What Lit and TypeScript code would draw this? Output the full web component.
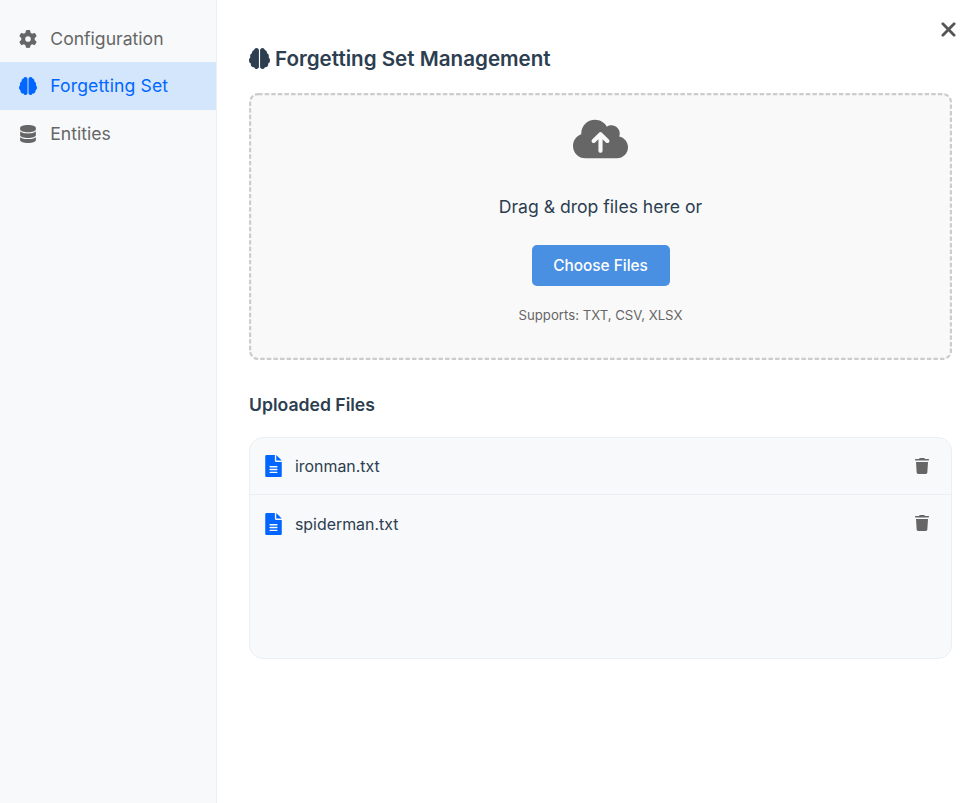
import { LitElement, html, css, svg } from "lit";
import { customElement, property, state } from "lit/decorators.js";
import { classMap } from "lit/directives/class-map.js";

const ICONS: Record<string, { box: string; d: string }> = {
  gear: {
    box: "0 0 512 512",
    d: "M495.9 166.6c3.2 8.7 .5 18.4-6.4 24.6l-43.3 39.4c1.1 8.3 1.7 16.8 1.7 25.4s-.6 17.1-1.7 25.4l43.3 39.4c6.9 6.2 9.6 15.9 6.4 24.6c-4.4 11.9-9.7 23.3-15.8 34.3l-4.7 8.1c-6.6 11-14 21.4-22.1 31.2c-5.9 7.2-15.7 9.6-24.5 6.8l-55.7-17.7c-13.4 10.3-28.2 18.9-44 25.4l-12.5 57.1c-2 9.1-9 16.3-18.2 17.8c-13.8 2.3-28 3.5-42.5 3.5s-28.7-1.2-42.5-3.5c-9.2-1.5-16.2-8.7-18.2-17.8l-12.5-57.1c-15.8-6.5-30.6-15.1-44-25.4L83.1 425.9c-8.8 2.8-18.6 .3-24.5-6.8c-8.1-9.8-15.5-20.2-22.1-31.2l-4.7-8.1c-6.1-11-11.4-22.4-15.8-34.3c-3.2-8.7-.5-18.4 6.4-24.6l43.3-39.4C64.6 273.1 64 264.6 64 256s.6-17.1 1.7-25.4L22.4 191.2c-6.9-6.2-9.6-15.9-6.4-24.6c4.4-11.9 9.7-23.3 15.8-34.3l4.7-8.1c6.6-11 14-21.4 22.1-31.2c5.9-7.2 15.7-9.6 24.5-6.8l55.7 17.7c13.4-10.3 28.2-18.9 44-25.4l12.5-57.1c2-9.1 9-16.3 18.2-17.8C227.3 1.2 241.5 0 256 0s28.7 1.2 42.5 3.5c9.2 1.5 16.2 8.7 18.2 17.8l12.5 57.1c15.8 6.5 30.6 15.1 44 25.4l55.7-17.7c8.8-2.8 18.6-.3 24.5 6.8c8.1 9.8 15.5 20.2 22.1 31.2l4.7 8.1c6.1 11 11.4 22.4 15.8 34.3zM256 336a80 80 0 1 0 0-160 80 80 0 1 0 0 160z",
  },
  brain: {
    box: "0 0 512 512",
    d: "M184 0c30.9 0 58 25.1 58 56V456c0 30.9-27.1 56-58 56c-28.9 0-50.7-17.9-59.7-43.1c-5.2 1.4-8.7 1.1-14.3 1.1c-35.3 0-66-30.7-66-66c0-9.4-.7-16.6 1.6-23.2C18.4 367.4 0 338.2 0 304c0-31.9 12.7-57.5 33.8-76.3C28.1 216.8 28 205 28 192c0-30.7 17.6-54.3 43.4-66.6C70.8 121.9 74 116 74 110c0-29.9 22.6-55.1 50.3-64.1C133.3 19.9 155.1 0 184 0zM328 0c28.9 0 50.6 19.9 59.7 45.9c27.8 9 50.3 34.1 50.3 64.1c0 6 3.2 11.9 2.6 15.4c25.8 12.3 43.4 35.9 43.4 66.6c0 13-.1 24.8-5.8 35.7C499.3 246.5 512 272.1 512 304c0 34.2-18.4 63.4-45.6 76.8c2.3 6.6 1.6 13.8 1.6 23.2c0 35.3-30.7 66-66 66c-5.6 0-9.1 .3-14.3-1.1c-9 25.2-30.8 43.1-59.7 43.1c-30.9 0-58-25.1-58-56V56c0-30.9 27.1-56 58-56z",
  },
  database: {
    box: "0 0 448 512",
    d: "M448 80v48c0 44.2-100.3 80-224 80S0 172.2 0 128V80C0 35.8 100.3 0 224 0S448 35.8 448 80zM393.2 214.7c20.8-7.4 39.9-16.9 54.8-28.6V288c0 44.2-100.3 80-224 80S0 332.2 0 288V186.1c14.9 11.8 34 21.2 54.8 28.6C99.7 230.7 159.5 240 224 240s124.3-9.3 169.2-25.3zM0 346.1c14.9 11.8 34 21.2 54.8 28.6C99.7 390.7 159.5 400 224 400s124.3-9.3 169.2-25.3c20.8-7.4 39.9-16.9 54.8-28.6V432c0 44.2-100.3 80-224 80S0 476.2 0 432V346.1z",
  },
  cloud: {
    box: "0 0 640 512",
    d: "M144 480C64.5 480 0 415.5 0 336c0-62.8 40.2-116.2 96.2-135.9c-.1-2.7-.2-5.4-.2-8.1c0-88.4 71.6-160 160-160c59.3 0 111 32.2 138.7 80.2C409.9 102 428.3 96 448 96c53 0 96 43 96 96c0 12.2-2.3 23.8-6.4 34.6C596 238.4 640 290.1 640 352c0 70.7-57.3 128-128 128H144zm79-217c-9.4 9.4-9.4 24.6 0 33.9s24.6 9.4 33.9 0l39-39V392c0 13.3 10.7 24 24 24s24-10.7 24-24V257.9l39 39c9.4 9.4 24.6 9.4 33.9 0s9.4-24.6 0-33.9l-80-80c-9.4-9.4-24.6-9.4-33.9 0l-80 80z",
  },
  file: {
    box: "0 0 384 512",
    d: "M224 136V0H32C14 0 0 14 0 32v448c0 18 14 32 32 32h320c18 0 32-14 32-32V160H248c-13.2 0-24-10.8-24-24zM384 128H256V0zM112 256H272c8.8 0 16 7.2 16 16s-7.2 16-16 16H112c-8.8 0-16-7.2-16-16s7.2-16 16-16zm0 66H272c8.8 0 16 7.2 16 16s-7.2 16-16 16H112c-8.8 0-16-7.2-16-16s7.2-16 16-16zm0 66H272c8.8 0 16 7.2 16 16s-7.2 16-16 16H112c-8.8 0-16-7.2-16-16s7.2-16 16-16z",
  },
  trash: {
    box: "0 0 448 512",
    d: "M135.2 17.7L124 32H16C7.2 32 0 39.2 0 48V64C0 72.8 7.2 80 16 80H432c8.8 0 16-7.2 16-16V48c0-8.8-7.2-16-16-16H324l-11.2-14.3C307.4 6.8 296.3 0 284.2 0H163.8c-12.1 0-23.2 6.8-28.6 17.7zM416 128H32L53.2 467c1.6 25.3 22.6 45 47.9 45H346.9c25.3 0 46.3-19.7 47.9-45L416 128z",
  },
  close: {
    box: "0 0 384 512",
    d: "M342.6 150.6c12.5-12.5 12.5-32.8 0-45.3s-32.8-12.5-45.3 0L192 210.7 86.6 105.4c-12.5-12.5-32.8-12.5-45.3 0s-12.5 32.8 0 45.3L146.7 256 41.4 361.4c-12.5 12.5-12.5 32.8 0 45.3s32.8 12.5 45.3 0L192 301.3 297.4 406.6c12.5 12.5 32.8 12.5 45.3 0s12.5-32.8 0-45.3L237.3 256 342.6 150.6z",
  },
};

@customElement("fs-icon")
class FsIcon extends LitElement {
  @property() name = "gear";
  static styles = css`
    :host { display: block; }
    .glyph { display: block; width: 100%; height: 100%; fill: currentColor; }
  `;
  render() {
    const icon = ICONS[this.name];
    return html`<svg class="glyph" viewBox=${icon.box} aria-hidden="true">${svg`<path d=${icon.d}></path>`}</svg>`;
  }
}

@customElement("app-root")
class AppRoot extends LitElement {
  @state() private active = "Forgetting Set";
  @state() private files = ["ironman.txt", "spiderman.txt"];
  private tabs = [
    { icon: "gear", label: "Configuration" },
    { icon: "brain", label: "Forgetting Set" },
    { icon: "database", label: "Entities" },
  ];

  static styles = css`
    * { box-sizing: border-box; }
    :host {
      display: flex;
      height: 100vh;
      overflow: hidden;
      position: relative;
      background: #fff;
      color: #2c3e50;
      font-family: Inter, "Liberation Sans", sans-serif;
    }
    button { font-family: inherit; border: 0; padding: 0; background: none; cursor: pointer; }
    .sidebar { width: 217px; flex: none; padding-top: 14.8px; background: #f8f9fb; border-right: 1px solid #eceff2; }
    .tab {
      display: flex; align-items: center; gap: 13.3px;
      width: 100%; height: 47.6px; padding: 0 19px;
      color: #666; font-size: 17.6px; line-height: 22px; text-align: left;
    }
    .tab.active { background: #d4e6fc; color: #0066ff; }
    .tab.active .tab-label { letter-spacing: 0.1px; }
    .tab-icon { width: 18px; height: 18px; }
    .main { flex: 1; min-width: 0; padding: 45px 23px 0 32px; display: flex; flex-direction: column; }
    .title { display: flex; align-items: center; gap: 5px; margin: 0; height: 27px; font-size: 20.6px; font-weight: 600; line-height: 28px; }
    .title-icon { width: 21px; height: 21px; }
    .close { position: absolute; top: 17.5px; right: 18px; }
    .close-icon { width: 17px; height: 23px; color: #555; }
    .drop {
      position: relative;
      margin-top: 21px; height: 267px; padding: 24px 0 0;
      display: flex; flex-direction: column; align-items: center;
      background: #f9f9f9; border-radius: 9px;
    }
    .outline { position: absolute; inset: 0; width: 100%; height: 100%; pointer-events: none; }
    .dashes {
      x: 1.1px; y: 1.1px; width: calc(100% - 2.2px); height: calc(100% - 2.2px); rx: 8px;
      fill: none; stroke: #ccc; stroke-width: 2.2px; stroke-dasharray: 4.4px 2.2px;
    }
    .cloud { width: 55px; height: 44px; color: #666; }
    .hint { margin: 33px 0 0; font-size: 17.6px; line-height: 26px; }
    .choose { margin-top: 25px; width: 138px; height: 41px; border-radius: 5px; background: #4a90e2; color: #fff; font-size: 15.4px; font-weight: 500; }
    .formats { margin: 19px 0 0; color: #666; font-size: 13.2px; line-height: 20px; }
    .subtitle { margin: 32px 0 0; font-size: 17.6px; font-weight: 600; line-height: 26px; }
    .files { margin: 19px 0 0; padding: 0; list-style: none; height: 221.5px; background: #f8f9fb; border: 1px solid #eceff2; border-radius: 14px; }
    .file { display: flex; align-items: center; height: 57px; padding: 0 22.5px 0 15.3px; border-bottom: 1px solid #eceff2; }
    .file:last-child { border-bottom: 0; }
    .file-icon { width: 17px; height: 22px; color: #0066ff; }
    .file-name { flex: 1; margin-left: 12.7px; padding-top: 2px; font-size: 15.9px; line-height: 24px; }
    .trash-icon { width: 14px; height: 16px; margin-bottom: 1px; color: #666; }
  `;

  render() {
    return html`
      <nav class="sidebar">
        ${this.tabs.map(
          (t) => html`<button class=${classMap({ tab: true, active: t.label === this.active })} @click=${() => (this.active = t.label)}>
            <fs-icon class="tab-icon" name=${t.icon}></fs-icon><span class="tab-label">${t.label}</span>
          </button>`
        )}
      </nav>
      <main class="main">
        <h2 class="title"><fs-icon class="title-icon" name="brain"></fs-icon><span>Forgetting Set Management</span></h2>
        <section class="drop">
          <svg class="outline" aria-hidden="true"><rect class="dashes"></rect></svg>
          <fs-icon class="cloud" name="cloud"></fs-icon>
          <p class="hint">Drag &amp; drop files here or</p>
          <button class="choose">Choose Files</button>
          <p class="formats">Supports: TXT, CSV, XLSX</p>
        </section>
        <h3 class="subtitle">Uploaded Files</h3>
        <ul class="files">
          ${this.files.map(
            (f) => html`<li class="file">
              <fs-icon class="file-icon" name="file"></fs-icon>
              <span class="file-name">${f}</span>
              <button aria-label="Delete" @click=${() => (this.files = this.files.filter((x) => x !== f))}>
                <fs-icon class="trash-icon" name="trash"></fs-icon>
              </button>
            </li>`
          )}
        </ul>
      </main>
      <button class="close" aria-label="Close"><fs-icon class="close-icon" name="close"></fs-icon></button>
    `;
  }
}
